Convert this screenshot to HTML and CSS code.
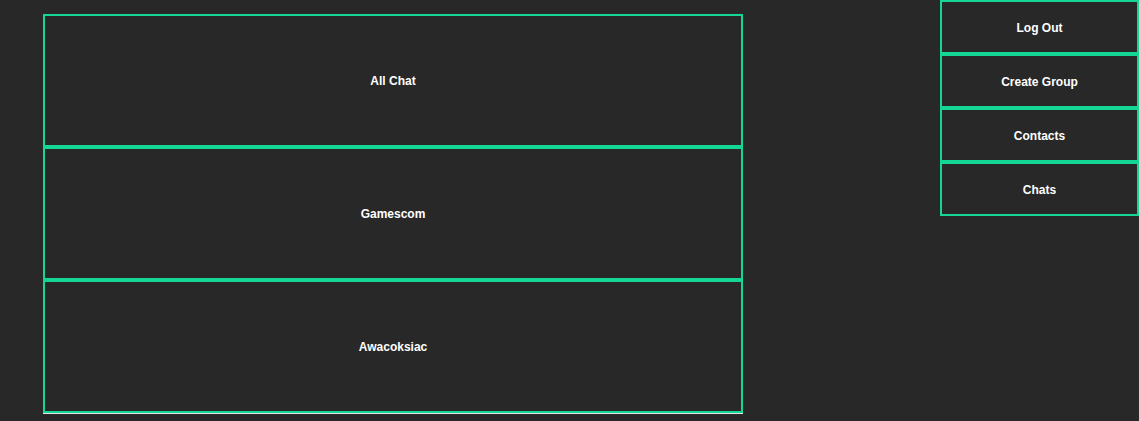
FILE: index.html
```html
<!DOCTYPE html>
<html>
<head>
<meta charset="utf-8">
<link rel="stylesheet" href="styles.css">
</head>
<body>
<div class="page">
  <div class="chat-list">
    <div class="chat-item">All Chat</div>
    <div class="chat-item">Gamescom</div>
    <div class="chat-item">Awacoksiac</div>
  </div>
  <nav class="side-nav">
    <div class="nav-btn">Log Out</div>
    <div class="nav-btn">Create Group</div>
    <div class="nav-btn">Contacts</div>
    <div class="nav-btn">Chats</div>
  </nav>
</div>
</body>
</html>
```
FILE: styles.css
```css
html, body {
  margin: 0;
  padding: 0;
  background: #282828;
  height: 100%;
}
body {
  font-family: "Liberation Sans", Arial, sans-serif;
  font-weight: bold;
  font-size: 12px;
  color: #ffffff;
}
.page {
  display: flex;
  align-items: flex-start;
  padding-left: 43px;
}
.chat-list {
  margin-top: 14px;
  width: 700px;
  display: flex;
  flex-direction: column;
  border-bottom: 1px solid #e6e6e6;
}
.chat-item {
  box-sizing: border-box;
  height: 133px;
  border: 2px solid #14d796;
  display: flex;
  align-items: center;
  justify-content: center;
}
.side-nav {
  margin-left: auto;
  width: 199px;
  display: flex;
  flex-direction: column;
}
.nav-btn {
  box-sizing: border-box;
  height: 54px;
  padding-top: 2px;
  border: 2px solid #14d796;
  display: flex;
  align-items: center;
  justify-content: center;
}
```
